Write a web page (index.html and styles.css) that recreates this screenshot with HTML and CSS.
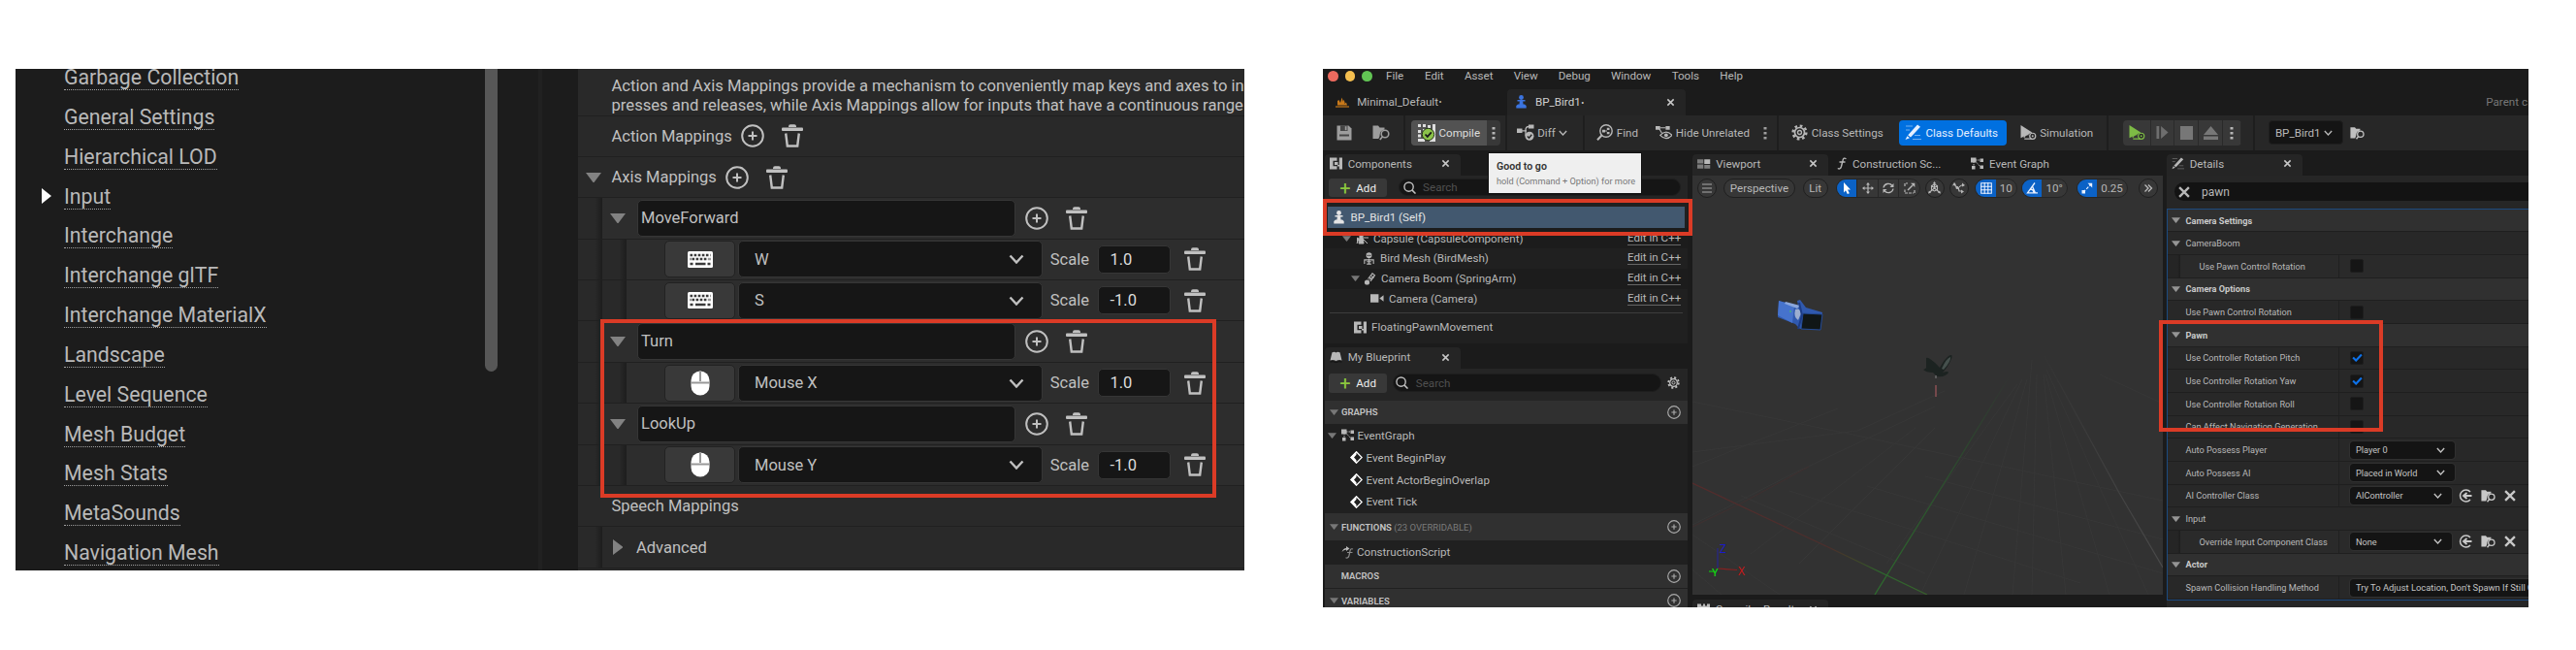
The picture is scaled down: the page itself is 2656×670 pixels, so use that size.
FILE: index.html
```html
<!DOCTYPE html>
<html lang="en">
<head>
<meta charset="utf-8">
<title>Input settings and blueprint editor</title>
<link rel="stylesheet" href="styles.css">
</head>
<body>
<svg class="defs" width="0" height="0">
  <symbol id="plus" viewBox="0 0 24 24"><circle cx="12" cy="12" r="10.8" fill="none" stroke="currentColor" stroke-width="2"/><path d="M12 7.5v9M7.500 12h9" stroke="currentColor" stroke-width="2"/></symbol>
  <symbol id="trash" viewBox="0 0 22 24"><path d="M7 3V2.500Q7 .3 9 .3h4q2 0 2 2V3z" fill="currentColor"/><rect x="0" y="3.600" width="22" height="3.400" rx="1" fill="currentColor"/><path d="M4.200 9.500l1.600 13h10.400l1.600-13" fill="none" stroke="currentColor" stroke-width="2.400"/></symbol>
  <symbol id="down" viewBox="0 0 16 10"><path d="M0 0h16L8.500 10h-1z" fill="currentColor"/></symbol>
  <symbol id="chev" viewBox="0 0 16 10"><path d="M1.500 1.500L8 8.500l6.500-7" fill="none" stroke="currentColor" stroke-width="2.400"/></symbol>
  <symbol id="kbd" viewBox="0 0 26 17"><rect width="26" height="17" rx="1.500" fill="#fff"/><path d="M2.500 4h21M4.500 8h17" stroke="#3a3a3a" stroke-width="2.600" stroke-dasharray="2.600 1.500"/><path d="M2.500 8h1M22.500 8h1M2.500 13h3M8 13h10.500M20.500 13h3" stroke="#3a3a3a" stroke-width="2.400"/></symbol>
  <symbol id="mouse" viewBox="0 0 20 26"><rect x=".5" y=".5" width="19" height="25" rx="9.500" fill="#fff"/><path d="M10 0v11M0 12.500h20" stroke="#999" stroke-width="2"/></symbol>
  <symbol id="x" viewBox="0 0 10 10"><path d="M1.500 1.500l7 7M8.500 1.500l-7 7" stroke="currentColor" stroke-width="1.700"/></symbol>
  <symbol id="dots" viewBox="0 0 4 14"><path d="M.5 1h3v2.600h-3zM.5 6h3v2.600h-3zM.5 11h3v2.600h-3z" fill="currentColor"/></symbol>
  <symbol id="search" viewBox="0 0 14 14"><circle cx="6" cy="6" r="5" fill="none" stroke="currentColor" stroke-width="1.500"/><path d="M9.500 9.500L13.500 13.500" stroke="currentColor" stroke-width="1.700"/></symbol>
  <symbol id="pawn" viewBox="0 0 11 14"><circle cx="5.500" cy="2.500" r="2.400" fill="currentColor"/><path d="M1.500 5h8v1.500h-8zM4 5h3l.6 5H3.400zM.3 11l1.700-1.500h7L10.700 11v2.600H.3z" fill="currentColor"/></symbol>
  <symbol id="save" viewBox="0 0 16 16"><path d="M.5.5h12l3 3v12H.5z" fill="currentColor"/><path d="M4 .5h7.500V6H4zM3 9.500h10v2H3z" fill="#282828" opacity=".75"/><path d="M8.800 1.200h1.700v4H8.800z" fill="currentColor"/></symbol>
  <symbol id="folder" viewBox="0 0 18 16"><path d="M.5 1h5.500l1.500 2h5v2Q8 6 7.800 9.500q0 2.500-1.500 5H.5z" fill="currentColor"/><circle cx="13" cy="9.500" r="3.800" fill="none" stroke="currentColor" stroke-width="1.600"/><path d="M10.500 12.200L7.800 15.500" stroke="currentColor" stroke-width="1.800"/></symbol>
  <symbol id="compile" viewBox="0 0 18 18"><path d="M0 0h3v3H0zM5 0h3v3H5zM10 1h3v3h-3zM0 6h3v3H0zM0 10.500h3v3H0zM0 15h3v3H0zM15 0h3v17h-3zM5 5h3v3H5zM3 15h4v3H3zM12 15h6v3h-6z" fill="#ddd"/><circle cx="10.500" cy="10.500" r="6.200" fill="#8bc24a" stroke="#26331a"/><path d="M7.500 10.500l2.300 2.400 4-4.500" fill="none" stroke="#1a1a1a" stroke-width="1.800"/></symbol>
  <symbol id="diff" viewBox="0 0 18 17"><path d="M0 4.500h5.500v4.500H0zM12 .5h5.500v4H12z" fill="currentColor"/><path d="M5 6.800h5M9 12V6q0-3.500 3-3.500" fill="none" stroke="currentColor" stroke-width="1.300"/><circle cx="13" cy="12.300" r="4.500" fill="currentColor"/><path d="M10.800 12.400l1.700 1.700 2.800-3.300" fill="none" stroke="#282828" stroke-width="1.400"/></symbol>
  <symbol id="find" viewBox="0 0 17 17"><circle cx="10" cy="7" r="6.200" fill="none" stroke="currentColor" stroke-width="1.400"/><path d="M5.500 11.500L1 16.200" stroke="currentColor" stroke-width="2"/><path d="M6 5.800h3v2.600H6zM10.800 3.800h2.700v2.200h-2.700zM10.800 8h2.700v2.200h-2.700z" fill="currentColor"/><path d="M9 7h2" stroke="currentColor"/></symbol>
  <symbol id="hide" viewBox="0 0 18 16"><path d="M0 1h5v4H0zM11 1h4.500v4H11z" fill="currentColor"/><path d="M5 3h6M4 4l3 5" fill="none" stroke="currentColor" stroke-width="1.200"/><path d="M5 11q6.500-7 13 0-6.500 7-13 0z" fill="none" stroke="currentColor" stroke-width="1.300"/><circle cx="11.500" cy="11" r="2" fill="currentColor"/></symbol>
  <symbol id="gear" viewBox="0 0 17 17"><circle cx="8.500" cy="8.500" r="6.900" fill="none" stroke="currentColor" stroke-width="2.400" stroke-dasharray="2.700 2.720"/><circle cx="8.500" cy="8.500" r="5" fill="none" stroke="currentColor" stroke-width="1.700"/><circle cx="8.500" cy="8.500" r="2" fill="none" stroke="currentColor" stroke-width="1.300"/></symbol>
  <symbol id="pencil" viewBox="0 0 17 17"><path d="M13 .5l3 2.300L6 13.500l-2.800-2.200zM2.500 12.200l2.500 2L.5 16z" fill="currentColor"/><path d="M1 2h7M1 6h4M10 11.500h6M8 15.500h9" stroke="currentColor" opacity=".5"/></symbol>
  <symbol id="sim" viewBox="0 0 18 17"><path d="M.5.5L13 8.500.5 14.500z" fill="currentColor"/><path d="M4 14q2-4 5-3M4.500 15.500h9" fill="none" stroke="currentColor" stroke-width="1.200"/><circle cx="13.500" cy="12.500" r="3.200" fill="#282828" stroke="currentColor" stroke-width="1.300"/><circle cx="13.500" cy="12.500" r="1" fill="currentColor"/></symbol>
  <symbol id="comp" viewBox="0 0 13 12"><path d="M0 0h7.500v3.200H3.500v5.600h4V12H0zM5 4.500h3.500v3H5zM9.800 0H13v12H9.800V9H8V7.500h1.800z" fill="currentColor"/></symbol>
  <symbol id="views" viewBox="0 0 14 10"><path d="M0 0h6.500v4.500H0zM0 5.500h6.500V10H0zM7.500 6H14v4H7.500z" fill="currentColor" opacity=".6"/><path d="M7.500 0H14v5H7.500z" fill="currentColor"/></symbol>
  <symbol id="graph" viewBox="0 0 13 12"><path d="M0 0h5.500v5H0zM9.500 1H13v3.500H9.500zM1 8.500h3.500V12H1zM9.500 8H13v3.500H9.500z" fill="currentColor"/><path d="M5 2.500h5M3 4v5M5 4l5 5.500" stroke="currentColor" stroke-dasharray="1.500 1"/></symbol>
  <symbol id="func" viewBox="0 0 10 13"><path d="M9.500 1.800Q6.800-.2 6 3.500L4.500 9.500Q3.500 13 .8 11.500M2.500 5h6" fill="none" stroke="currentColor" stroke-width="1.400"/></symbol>
  <symbol id="cfunc" viewBox="0 0 13 13"><path d="M12 3Q9.500 2 9 5L8 9.500Q7 13 4.500 11.800M6 6.500h5.500" fill="none" stroke="currentColor" stroke-width="1.200" opacity=".7"/><path d="M.5 6Q2 2 5 2V0l3.500 2.500L5 5V3.500Q2.500 3.500.5 6z" fill="currentColor"/></symbol>
  <symbol id="event" viewBox="0 0 13 13"><path d="M6.500.8l5.700 5.700-5.700 5.700L.8 6.500z" fill="none" stroke="#fff" stroke-width="1.300"/><path d="M6.500.3v3.500L4 6.500l2.500 2.700v3.500L.3 6.500z" fill="#fff"/></symbol>
  <symbol id="capsule" viewBox="0 0 13 13"><circle cx="5.500" cy="3" r="2.500" fill="currentColor"/><path d="M4 5h3l1 7H3zM1 6l2 1-2 5M8 3l4-2M8 6h5M8 8l4 4" fill="currentColor" stroke="currentColor"/></symbol>
  <symbol id="skel" viewBox="0 0 12 14"><path d="M3 1.500Q6-1 9 1.500V5L7.500 6.500h-3L3 5z" fill="currentColor"/><path d="M4.300 3h1.200v1.200H4.300zM6.500 3h1.200v1.200H6.500z" fill="#222"/><path d="M1 13V8.500h10V13M6 7v6M3.500 10.500h5M3.500 13h5" fill="none" stroke="currentColor" stroke-width="1.200"/></symbol>
  <symbol id="arm" viewBox="0 0 12 13"><circle cx="3" cy="10" r="2.600" fill="currentColor"/><path d="M4 6.500L8.500.8l2.500 2-4.500 6" fill="none" stroke="currentColor" stroke-width="1.100"/><path d="M5.500 5l3 2M7 3.200l3 2M5 7.500l5-4" stroke="currentColor"/></symbol>
  <symbol id="cam" viewBox="0 0 15 9"><path d="M0 0h9v9H0zM14.500 1v7L10 4.500z" fill="currentColor"/></symbol>
  <symbol id="book" viewBox="0 0 13 12"><path d="M2.500.8Q5-.3 6.500 1 8-.3 10.500.8L12.500 9q-3-1-6 .6Q3.500 8 .5 9z" fill="currentColor"/><path d="M.5 10.500q3-1 6 .6 3-1.600 6-.6" fill="none" stroke="#111"/></symbol>
  <symbol id="level" viewBox="0 0 14 11"><path d="M2 8.500V4l1.500-1L5 6 6.500.5 8 5V2.500L9.500 5v2l1.500-1.500 1 3z" fill="#c8791a"/><path d="M0 10h14" stroke="#c8791a" stroke-width="1.200"/></symbol>
  <symbol id="move" viewBox="0 0 12 12"><path d="M6 1v10M1 6h10" stroke="currentColor" stroke-width="1.200"/><path d="M6 0l2 2.500H4zM6 12l2-2.500H4zM0 6l2.500-2v4zM12 6L9.500 4v4z" fill="currentColor"/></symbol>
  <symbol id="rot" viewBox="0 0 12 12"><path d="M1 5.500A5 5 0 0 1 10 3.500M11 6.500A5 5 0 0 1 2 8.500" fill="none" stroke="currentColor" stroke-width="1.300"/><path d="M11.500 1v4h-4zM.5 11V7h4z" fill="currentColor"/></symbol>
  <symbol id="scale" viewBox="0 0 12 12"><path d="M1 4V1h3M8 11H1V7.500M11 8v3H9" fill="none" stroke="currentColor" stroke-width="1.200" stroke-dasharray="3 1"/><path d="M4 8l5-5" stroke="currentColor" stroke-width="1.400"/><path d="M7 .8h4.300V5z" fill="currentColor"/></symbol>
  <symbol id="gizmo" viewBox="0 0 13 13"><path d="M6.500 1v6M6.500 7L1 11.500M6.500 7l5.500 4.500M3.500 4.500l3-1.500 3 1.500v4l-3 1.500-3-1.500zM3.500 4.500l3 2 3-2" fill="none" stroke="currentColor" stroke-width="1.100"/><path d="M6.500 0l1.800 2.500H4.700zM0 12.500l1-3 2 2.200zM13 12.500l-1-3-2 2.200z" fill="currentColor"/></symbol>
  <symbol id="snap" viewBox="0 0 13 13"><path d="M2 2q1 4 4 4M6 6l1 4h3M7 6q2-3 5-2" fill="none" stroke="currentColor" stroke-width="1.200"/><path d="M0 4.500l4-1L2 1zM10 1.500l3 2.500-3 1.500zM9 8.500l3 2-3 2z" fill="currentColor"/><circle cx="5" cy="6.500" r="1.500" fill="currentColor"/></symbol>
  <symbol id="grid" viewBox="0 0 12 12"><path d="M.7.7h10.600v10.600H.7zM4.200 0v12M7.800 0v12M0 4.200h12M0 7.800h12" fill="none" stroke="currentColor" stroke-width="1.100"/></symbol>
  <symbol id="angle" viewBox="0 0 12 12"><path d="M9 .5L1.500 10.800H12M4 7q4 0 4 4M6.500 4l3 7" fill="none" stroke="currentColor" stroke-width="1.300"/></symbol>
  <symbol id="resize" viewBox="0 0 12 12"><path d="M2 10l8-8" stroke="currentColor" stroke-width="1.200" stroke-dasharray="3 1.500"/><path d="M6.500.8h4.700v4.700zM.5 8h3.500v3.500H.5z" fill="currentColor"/></symbol>
  <symbol id="use" viewBox="0 0 13 14"><path d="M11.500 3A6 6 0 1 0 11.500 11" fill="none" stroke="currentColor" stroke-width="1.500"/><path d="M5 7h8M8 4L4.500 7 8 10" fill="none" stroke="currentColor" stroke-width="1.800"/></symbol>
</svg>

<main class="shots">
  <section class="settings">
    <nav class="cats">
      <a>Garbage Collection</a><a>General Settings</a><a>Hierarchical LOD</a><a class="cur">Input</a><a>Interchange</a><a>Interchange glTF</a><a>Interchange MaterialX</a><a>Landscape</a><a>Level Sequence</a><a>Mesh Budget</a><a>Mesh Stats</a><a>MetaSounds</a><a>Navigation Mesh</a>
    </nav>
    <div class="scroll"><div class="thumb"></div></div>
    <div class="split"></div>
    <div class="table">
      <p class="desc">Action and Axis Mappings provide a mechanism to conveniently map keys and axes to in<br>presses and releases, while Axis Mappings allow for inputs that have a continuous range</p>
      <div class="row top">Action Mappings<svg class="plus"><use href="#plus"/></svg><svg class="trash"><use href="#trash"/></svg></div>
      <div class="row top"><svg class="tri"><use href="#down"/></svg>Axis Mappings<svg class="plus"><use href="#plus"/></svg><svg class="trash"><use href="#trash"/></svg></div>
      <div class="row"><i class="ind"></i><svg class="tri"><use href="#down"/></svg><div class="name">MoveForward</div><svg class="plus"><use href="#plus"/></svg><svg class="trash"><use href="#trash"/></svg></div>
      <div class="row key"><i class="ind"></i><i class="ind"></i><div class="dev"><svg class="kbd"><use href="#kbd"/></svg></div><div class="pick">W<svg class="chev"><use href="#chev"/></svg></div><span class="lab">Scale</span><div class="num">1.0</div><svg class="trash"><use href="#trash"/></svg></div>
      <div class="row key"><i class="ind"></i><i class="ind"></i><div class="dev"><svg class="kbd"><use href="#kbd"/></svg></div><div class="pick">S<svg class="chev"><use href="#chev"/></svg></div><span class="lab">Scale</span><div class="num">-1.0</div><svg class="trash"><use href="#trash"/></svg></div>
      <div class="row"><i class="ind"></i><svg class="tri"><use href="#down"/></svg><div class="name">Turn</div><svg class="plus"><use href="#plus"/></svg><svg class="trash"><use href="#trash"/></svg></div>
      <div class="row key"><i class="ind"></i><i class="ind"></i><div class="dev"><svg class="mouse"><use href="#mouse"/></svg></div><div class="pick">Mouse X<svg class="chev"><use href="#chev"/></svg></div><span class="lab">Scale</span><div class="num">1.0</div><svg class="trash"><use href="#trash"/></svg></div>
      <div class="row"><i class="ind"></i><svg class="tri"><use href="#down"/></svg><div class="name">LookUp</div><svg class="plus"><use href="#plus"/></svg><svg class="trash"><use href="#trash"/></svg></div>
      <div class="row key"><i class="ind"></i><i class="ind"></i><div class="dev"><svg class="mouse"><use href="#mouse"/></svg></div><div class="pick">Mouse Y<svg class="chev"><use href="#chev"/></svg></div><span class="lab">Scale</span><div class="num">-1.0</div><svg class="trash"><use href="#trash"/></svg></div>
      <div class="row top">Speech Mappings</div>
      <div class="row adv"><i class="ind"></i><svg class="tri shut"><use href="#down"/></svg>Advanced</div>
    </div>
    <div class="mark mark-axis"></div>
  </section>

  <section class="editor">
    <div class="menu"><b class="dot red"></b><b class="dot yel"></b><b class="dot grn"></b><span>File</span><span>Edit</span><span>Asset</span><span>View</span><span>Debug</span><span>Window</span><span>Tools</span><span>Help</span></div>
    <div class="tabs">
      <div class="tab1"><svg class="i-level"><use href="#level"/></svg>Minimal_Default<small>•</small></div>
      <div class="tab2"><svg class="i-pawn blue"><use href="#pawn"/></svg><span>BP_Bird1<small>•</small></span><svg class="close"><use href="#x"/></svg></div>
      <div class="parent">Parent c</div>
    </div>
    <div class="bar">
      <svg class="i16"><use href="#save"/></svg>
      <svg class="i18"><use href="#folder"/></svg>
      <i class="sep"></i>
      <div class="compile"><div class="lit"><svg class="i18t"><use href="#compile"/></svg>Compile</div><svg class="dots"><use href="#dots"/></svg></div>
      <i class="sep"></i>
      <div class="act"><svg class="i18"><use href="#diff"/></svg>Diff<svg class="chs"><use href="#chev"/></svg></div>
      <i class="sep"></i>
      <div class="act"><svg class="i17"><use href="#find"/></svg>Find</div>
      <div class="act"><svg class="i17"><use href="#hide"/></svg>Hide Unrelated</div>
      <svg class="dots"><use href="#dots"/></svg>
      <i class="sep"></i>
      <div class="act"><svg class="i17"><use href="#gear"/></svg>Class Settings</div>
      <div class="defaults"><svg class="i17"><use href="#pencil"/></svg>Class Defaults</div>
      <div class="act"><svg class="i17"><use href="#sim"/></svg>Simulation</div>
      <i class="sep"></i>
      <div class="play"><span><svg class="i17 green"><use href="#sim"/></svg></span><span><svg class="i13" viewBox="0 0 13 14"><path d="M0 0h3v14H0zM5 0l8 7-8 7z" fill="#6e6e6e"/></svg></span><span><b class="stop"></b></span><span><svg class="i15" viewBox="0 0 15 14"><path d="M7.500 0L15 9H0zM0 10.500h15V14H0z" fill="#777"/></svg></span><span><svg class="dots"><use href="#dots"/></svg></span></div>
      <i class="sep"></i>
      <div class="bp">BP_Bird1<svg class="chs"><use href="#chev"/></svg></div>
      <svg class="i15"><use href="#folder"/></svg>
    </div>
    <div class="cols">
      <div class="left">
        <div class="ptab"><svg class="i13"><use href="#comp"/></svg><span>Components</span><svg class="close"><use href="#x"/></svg></div>
        <div class="comps">
          <div class="tools"><div class="add"><b>+</b>Add</div><div class="find"><svg class="i13"><use href="#search"/></svg>Search</div></div>
          <div class="self"><svg class="i-pawn"><use href="#pawn"/></svg>BP_Bird1 (Self)</div>
          <div class="c c1"><svg class="tr"><use href="#down"/></svg><svg class="i13"><use href="#capsule"/></svg>Capsule (CapsuleComponent)<u>Edit in C++</u></div>
          <div class="c c2"><svg class="i13"><use href="#skel"/></svg>Bird Mesh (BirdMesh)<u>Edit in C++</u></div>
          <div class="c c3"><svg class="tr"><use href="#down"/></svg><svg class="i13"><use href="#arm"/></svg>Camera Boom (SpringArm)<u>Edit in C++</u></div>
          <div class="c c4"><svg class="i-cam"><use href="#cam"/></svg>Camera (Camera)<u>Edit in C++</u></div>
          <div class="c c5"><svg class="i13"><use href="#comp"/></svg>FloatingPawnMovement</div>
        </div>
        <div class="ptab"><svg class="i13"><use href="#book"/></svg><span>My Blueprint</span><svg class="close"><use href="#x"/></svg></div>
        <div class="bpp">
          <div class="tools t2"><div class="add"><b>+</b>Add</div><div class="find"><svg class="i13"><use href="#search"/></svg>Search</div><svg class="i13"><use href="#gear"/></svg></div>
          <div class="hd"><svg class="tr"><use href="#down"/></svg>GRAPHS<svg class="pl"><use href="#plus"/></svg></div>
          <div class="g g1"><svg class="tr"><use href="#down"/></svg><svg class="i13"><use href="#graph"/></svg>EventGraph</div>
          <div class="g"><svg class="i13"><use href="#event"/></svg>Event BeginPlay</div>
          <div class="g"><svg class="i13"><use href="#event"/></svg>Event ActorBeginOverlap</div>
          <div class="g"><svg class="i13"><use href="#event"/></svg>Event Tick</div>
          <div class="hd fn"><svg class="tr"><use href="#down"/></svg>FUNCTIONS&nbsp;<em>(23 OVERRIDABLE)</em><svg class="pl"><use href="#plus"/></svg></div>
          <div class="g cs"><svg class="i13"><use href="#cfunc"/></svg>ConstructionScript</div>
          <div class="hd mac">MACROS<svg class="pl"><use href="#plus"/></svg></div>
          <div class="hd var"><svg class="tr"><use href="#down"/></svg>VARIABLES<svg class="pl"><use href="#plus"/></svg></div>
        </div>
      </div>
      <div class="mid">
        <div class="vtabs"><div class="ptab"><svg class="i-view"><use href="#views"/></svg><span>Viewport</span><svg class="close"><use href="#x"/></svg></div><div class="vt"><svg class="i-f"><use href="#func"/></svg>Construction Sc...</div><div class="vt"><svg class="i13"><use href="#graph"/></svg>Event Graph</div></div>
        <div class="view">
          <div class="vbar">
            <div class="rnd"><svg class="i10" viewBox="0 0 10 10"><path d="M0 1h10M0 5h10M0 9h10" stroke="#aaa" stroke-width="1.200"/></svg></div>
            <div class="rnd">Perspective</div><div class="rnd">Lit</div>
            <div class="seg four"><span class="on"><svg class="i12" viewBox="0 0 12 12"><path d="M3 0l7 7.500H7l1.800 3.700-2 .8L5 8.200 3 10.500z" fill="#fff"/></svg></span><span><svg class="i12"><use href="#move"/></svg></span><span><svg class="i12"><use href="#rot"/></svg></span><span><svg class="i12"><use href="#scale"/></svg></span></div>
            <div class="rnd"><svg class="i13"><use href="#gizmo"/></svg></div>
            <div class="rnd"><svg class="i13"><use href="#snap"/></svg></div>
            <div class="seg"><span class="on"><svg class="i12"><use href="#grid"/></svg></span><span>10</span></div>
            <div class="seg"><span class="on"><svg class="i12"><use href="#angle"/></svg></span><span>10°</span></div>
            <div class="seg"><span class="on"><svg class="i12"><use href="#resize"/></svg></span><span>0.25</span></div>
            <div class="rnd"><svg class="i10" viewBox="0 0 10 10"><path d="M1.500 1.500L5 5 1.500 8.500M5 1.500L8.500 5 5 8.500" fill="none" stroke="#bbb" stroke-width="1.300"/></svg></div>
          </div>
          <svg class="scene" viewBox="0 28 485 404">
            <defs>
              <linearGradient id="gl" x1="0" y1="1" x2="0" y2="0"><stop offset="0" stop-color="#2d6b2d"/><stop offset=".6" stop-color="#2c4a2e"/><stop offset="1" stop-color="#323232"/></linearGradient>
              <linearGradient id="rl" x1="0" y1="0" x2="1" y2="0"><stop offset="0" stop-color="#562b2b"/><stop offset=".58" stop-color="#4c2e2c"/><stop offset=".72" stop-color="#3c4a28"/><stop offset=".8" stop-color="#2d6b2d"/><stop offset="1" stop-color="#37612b"/></linearGradient>
              <linearGradient id="wl" x1="0" y1="0" x2="0" y2="1"><stop offset="0" stop-color="#333"/><stop offset="1" stop-color="#4a4a4a"/></linearGradient>
            </defs>
            <g fill="none" stroke="#373737" stroke-width="1">
              <path d="M0 233L170 268 283 292 485 335M0 285L170 263 260 222M0 360L100 309 250 238M0 406L30 432M0 370L90 432M50 330L240 410M100 325L400 420M180 320L485 410M240 310L485 375M350 190L330 432M345 210L280 432M355 205L350 432M362 205L385 432M364 205L430 432M340 210L235 432M335 215L200 400M365 200L470 432M420 205L485 235M0 300L150 240M60 390L230 260M110 400L250 260"/>
            </g>
            <path d="M363 186L440 327 485 404" stroke="url(#wl)" fill="none" stroke-width="1.200"/>
            <path d="M0 362L50 338 120 300" stroke="#3f3030" fill="none"/>
            <path d="M0 317L140 383 242 432" stroke="url(#rl)" fill="none" stroke-width="1.200"/>
            <path d="M328 205L275 292 188 432" stroke="url(#gl)" fill="none" stroke-width="1.300"/>
            <g>
              <path d="M89 129l16 4 4 1-1-5 3-1 6 8 17 5-2 18-21-1-5-5-18-7z" fill="#3059ae"/>
              <path d="M89 129l16 5-2 18-15-8z" fill="#4673cd"/><path d="M96 130l15 4-3 3-13-5z" fill="#8aa6dc"/>
              <path d="M114 142l20 1-2 16-20-1z" fill="#101617" stroke="#244b96"/><path d="M106 138q5-2 6 4l-3 7q-5-3-3-11z" fill="#9caed0"/><path d="M110 131l3 13-4 14" stroke="#1d3c86" stroke-width="2" fill="none"/><circle cx="101" cy="140" r="1" fill="#43b37a"/>
            </g>
            <g>
              <path d="M241 188q1-1 4 1 6 4 10 9 5-9 9-12 5-3 3 3-4 9-9 14 6-2 6 0-3 5-12 4l-4-4q-7 0-10-3 3-1 3-2z" fill="#1c2321"/>
              <path d="M257 199q5-11 9-12 1 4-7 13z" fill="#45504d"/><path d="M251 216v12" stroke="#8c5055" stroke-width="1.500"/><path d="M251 206v3" stroke="#5a5a5a" stroke-width="2"/>
            </g>
            <path d="M26 384v21" stroke="#25258a" stroke-width="1.200"/><path d="M26 405l20 1.500" stroke="#8a2020" stroke-width="1.200"/><path d="M17 408h5" stroke="#14b814" stroke-width="1.300"/>
            <text x="28" y="389" fill="#1a1acb" class="ax">Z</text><text x="20" y="412.500" fill="#12cf12" class="ax sm">Y</text><text x="47" y="411.500" fill="#cf1515" class="ax">X</text>
          </svg>
        </div>
        <div class="ptab results"><svg class="i13" viewBox="0 0 13 12"><path d="M1 0h3v2h2V0h2v2h2V0h3v12H0V0z" fill="#bbb"/></svg><span>Compiler Results</span><svg class="close"><use href="#x"/></svg></div>
      </div>
      <div class="right">
        <div class="ptab"><svg class="i13"><use href="#pencil"/></svg><span>Details</span><svg class="close"><use href="#x"/></svg></div>
        <div class="dbody">
          <div class="dsearch"><svg class="i14"><use href="#x"/></svg>pawn</div>
          <div class="props">
            <div class="p cat"><svg class="tr"><use href="#down"/></svg>Camera Settings</div>
            <div class="p grp"><svg class="tr"><use href="#down"/></svg>CameraBoom</div>
            <div class="p sub"><span>Use Pawn Control Rotation</span><b class="chk"></b></div>
            <div class="p cat"><svg class="tr"><use href="#down"/></svg>Camera Options</div>
            <div class="p"><span>Use Pawn Control Rotation</span><b class="chk"></b></div>
            <div class="p cat"><svg class="tr"><use href="#down"/></svg>Pawn</div>
            <div class="p"><span>Use Controller Rotation Pitch</span><b class="chk"><svg viewBox="0 0 10 8"><path d="M1 4l2.800 2.800L9 1.200" fill="none" stroke="#0d72ea" stroke-width="1.900"/></svg></b></div>
            <div class="p"><span>Use Controller Rotation Yaw</span><b class="chk"><svg viewBox="0 0 10 8"><path d="M1 4l2.800 2.800L9 1.200" fill="none" stroke="#0d72ea" stroke-width="1.900"/></svg></b></div>
            <div class="p"><span>Use Controller Rotation Roll</span><b class="chk"></b></div>
            <div class="p"><span>Can Affect Navigation Generation</span><b class="chk"></b></div>
            <div class="p"><span>Auto Possess Player</span><div class="sel wide">Player 0<svg class="chs"><use href="#chev"/></svg></div></div>
            <div class="p"><span>Auto Possess AI</span><div class="sel wide">Placed in World<svg class="chs"><use href="#chev"/></svg></div></div>
            <div class="p"><span>AI Controller Class</span><div class="sel">AIController<svg class="chs"><use href="#chev"/></svg></div><svg class="i14 a"><use href="#use"/></svg><svg class="i15 a"><use href="#folder"/></svg><svg class="i14 a"><use href="#x"/></svg></div>
            <div class="p grp"><svg class="tr"><use href="#down"/></svg>Input</div>
            <div class="p sub"><span>Override Input Component Class</span><div class="sel">None<svg class="chs"><use href="#chev"/></svg></div><svg class="i14 a"><use href="#use"/></svg><svg class="i15 a"><use href="#folder"/></svg><svg class="i14 a"><use href="#x"/></svg></div>
            <div class="p cat"><svg class="tr"><use href="#down"/></svg>Actor</div>
            <div class="p"><span>Spawn Collision Handling Method</span><div class="sel full">Try To Adjust Location, Don't Spawn If Still Colliding</div></div>
          </div>
        </div>
      </div>
    </div>
    <div class="tip"><strong>Good to go</strong><small>hold (Command + Option) for more</small></div>
    <div class="mark mark-self"></div>
    <div class="mark mark-pawn"></div>
  </section>
</main>
</body>
</html>
```
FILE: styles.css
```css
* { box-sizing: border-box; }
body { margin: 0; background: #fff; font-family: Roboto, "Liberation Sans", sans-serif; }
svg { display: block; flex: none; }
.defs { position: absolute; }
.shots { display: flex; gap: 81px; align-items: flex-start; padding: 71px 0 0 16px; width: 2656px; height: 670px; overflow: hidden; }
.mark { position: absolute; border: 4px solid #db3b26; }

/* project settings */
.settings { position: relative; display: flex; width: 1267px; height: 517px; overflow: hidden; background: #1c1c1c; color: #c0c0c0; font-size: 16.5px; }
.cats { width: 484px; padding-left: 50px; margin-top: -4px; display: flex; flex-direction: column; align-items: flex-start; }
.cats a { position: relative; flex: none; height: 26px; margin-bottom: 14.85px; line-height: 25px; font-size: 21.3px; color: #b9b9b9; border-bottom: 1px dotted #a0a0a0; white-space: nowrap; }
.cats .cur::before { content: ""; position: absolute; left: -23.500px; top: 4px; border: solid transparent; border-width: 8px 0 8px 10px; border-left-color: #fff; }
.scroll { width: 13px; }
.thumb { height: 312px; background: #575757; border-radius: 0 0 7px 7px; }
.split { width: 4px; margin: 0 37px 0 42px; background: #212121; }
.table { flex: 1; width: 687px; overflow: hidden; background: #292929; }
.desc { margin: 0; height: 48.500px; padding: 8px 0 0 34.500px; line-height: 19.700px; font-size: 16.640px; white-space: nowrap; border-bottom: 1.500px solid #202020; }
.row { display: flex; align-items: center; height: 42.400px; background: #2d2d2d; border-bottom: 1.500px solid #202020; }
.top, .adv { background: #292929; }
.top { padding-left: 34.500px; }
.row .tri { width: 16px; height: 10px; color: #828282; margin-left: 8px; margin-right: 12px; }
.top .tri { margin-left: -27px; margin-right: 11px; }
.row .shut { transform: rotate(-90deg); margin-right: 11px; }
.ind { width: 25px; align-self: stretch; background: linear-gradient(90deg, #292929 70%, #1d1d1d); }
.plus { width: 24px; height: 24px; margin-left: 9px; }
.trash { width: 22px; height: 24px; margin-left: 18px; }
.name { width: 389.500px; height: 38px; line-height: 36px; padding-left: 3px; background: #161616; border: 1px solid #363636; border-radius: 5px; }
.name + .plus { margin-left: 10px; }
.dev { width: 73px; height: 38px; margin-left: 39px; display: grid; place-items: center; background: #393939; border: 1px solid #222; border-radius: 5px; }
.kbd { width: 26px; height: 17px; }
.mouse { width: 20px; height: 26px; }
.pick { width: 314px; height: 38px; margin-left: 3px; padding: 0 18px 0 16px; display: flex; align-items: center; justify-content: space-between; background: #161616; border: 1px solid #363636; border-radius: 5px; }
.chev { width: 16px; height: 10px; }
.lab { width: 56.500px; padding-left: 7.800px; }
.num { width: 75px; height: 29px; line-height: 27px; padding-left: 12px; background: #161616; border: 1px solid #363636; border-radius: 5px; color: #ddd; }
.num + .trash { margin-left: 14.500px; }
.mark-axis { left: 603px; top: 258px; width: 635px; height: 184px; }

/* blueprint editor */
.editor { position: relative; width: 1243px; height: 555px; overflow: hidden; background: #1b1b1b; color: #b8b8b8; font-size: 11.600px; white-space: nowrap; }
.menu { display: grid; grid-template-columns: 17.300px 17.700px 24.700px 40px 41px 50.700px 46px 54.300px 62.700px 49.600px 1fr; padding-left: 5.300px; height: 20.500px; align-items: center; padding-bottom: 6px; }
.dot { width: 10.700px; height: 10.700px; border-radius: 50%; }
.red { background: #ed6a5e; } .yel { background: #f5bf4f; } .grn { background: #62c554; }
.tabs { display: grid; grid-template-columns: 190px 184px 825.300px 1fr; height: 27px; align-items: stretch; }
.tabs > div { display: flex; align-items: center; }
.tabs small { font-size: 9px; margin-left: .5px; }
.tab1 { padding-left: 12.700px; }
.i-level { width: 14px; height: 11px; margin-right: 8.500px; }
.tab2 { background: #242424; border-radius: 4px 4px 0 0; padding: 0 11px 0 9px; color: #d0d0d0; }
.tab2 span { flex: 1; padding-left: 9px; }
.i-pawn { width: 11px; height: 14px; color: #e4e4e4; }
.blue { color: #3b74e0; }
.close { width: 9px; height: 9px; color: #c8c8c8; }
.parent { grid-column: 4; color: #777; }
.bar { height: 36.500px; background: #272727; display: grid; align-items: center; padding-left: 13.700px; grid-template-columns: 37px 32.600px 7.700px 97px 11.700px 68px 14.600px 61px 110.700px 14px 15.300px 110.700px 124.700px 89.600px 16.700px 134px 16px 84px 1fr; }
.bar > svg { color: #9d9d9d; }
.sep { width: 2px; height: 36px; background: #1e1e1e; }
.i10 { width: 10px; height: 10px; } .i12 { width: 12px; height: 12px; } .i13 { width: 13px; height: 13px; } .i14 { width: 14px; height: 14px; } .i15 { width: 15px; height: 14px; }
.i16 { width: 16px; height: 16px; } .i17 { width: 17px; height: 17px; } .i18 { width: 18px; height: 17px; } .i18t { width: 18px; height: 18px; }
.dots { width: 4px; height: 14px; color: #b5b5b5; }
.act { display: flex; align-items: center; gap: 3.600px; }
.chs { width: 9px; height: 6px; }
.compile { display: flex; align-items: center; width: 92.300px; height: 26px; background: #383838; border-radius: 4px; overflow: hidden; color: #dedede; }
.lit { display: flex; align-items: center; gap: 3.500px; width: 78px; height: 100%; padding-left: 7px; background: #525252; }
.compile .dots { margin-left: 5px; }
.defaults { display: flex; align-items: center; gap: 4px; width: 110.700px; height: 26px; padding-left: 6.500px; background: #0070e0; border-radius: 4px; color: #e6efff; }
.play { display: grid; grid-template-columns: 29.500px 24px 24.600px 25.400px 19px; width: 122.500px; height: 26px; background: #383838; border-radius: 4px; overflow: hidden; }
.play span { display: grid; place-items: center; border-right: 1px solid #2a2a2a; }
.green { color: #7dbb45; }
.stop { width: 13px; height: 14px; background: #777; }
.bp { display: flex; align-items: center; justify-content: space-between; width: 77px; height: 25px; padding: 0 10px 0 6px; background: #141414; border-radius: 4px; border: 1px solid #1f1f1f; }
.bar > .i15 { color: #c0c0c0; }

.cols { display: grid; grid-template-columns: 379px 489px 1fr; height: 471px; padding: 3.700px 0 0 2px; }
.ptab { display: flex; align-items: center; width: 139.700px; height: 22px; flex: none; background: #252525; border-radius: 4px 4px 0 0; padding: 0 11px 2px 5px; }
.ptab span { flex: 1; padding-left: 5.700px; }
.left { width: 374.300px; }
.comps { height: 173px; margin-bottom: 4.700px; background: #202020; }
.tools { display: grid; grid-template-columns: 60px 1fr; gap: 11.300px; height: 27px; padding: 3.300px 7px 0 4.300px; background: #252525; }
.add { display: flex; align-items: center; height: 19.500px; background: #383838; border-radius: 3px; padding-left: 11px; color: #eee; }
.add b { width: 17px; font-size: 20px; font-weight: 400; line-height: 12px; color: #8cc63e; }
.tools .find { display: flex; align-items: center; gap: 7.500px; height: 18.500px; border-radius: 10px; background: #151515; color: #505050; padding-left: 4px; border: 1px solid #1e1e1e; }
.find svg { color: #c0c0c0; }
.self { display: flex; align-items: center; gap: 6.500px; height: 22px; margin: 5px 3.300px .5px 3px; padding-left: 6px; background: #42586f; color: #e4e4e4; }
.c { display: flex; align-items: center; height: 20.800px; padding-right: 7px; gap: 5px; }
.tr { width: 9px; height: 6px; color: #777; }
.c u { margin-left: auto; text-decoration: none; border-bottom: 1px solid #666; line-height: 13px; }
.c1 { padding-left: 18px; background: #1c1c1c; }
.c2 { padding-left: 39px; }
.c3 { padding-left: 27px; background: #1c1c1c; }
.c3 .tr { margin-right: -1px; }
.c4 { padding-left: 47px; }
.i-cam { width: 14px; height: 9px; }
.c5 { margin: 4px 5px 0; padding-left: 25px; height: 29px; border-top: 1.500px solid #3c3c3c; }
.t2 { height: 32.300px; padding-top: 5px; grid-template-columns: 60px 277px 13px; gap: 6px; }
.t2 .find { gap: 7.500px; padding-left: 2px; }
.t2 > svg { margin-top: 3px; color: #c0c0c0; }
.bpp { background: #202020; }
.hd { display: flex; align-items: center; height: 24.300px; padding: 0 7px 0 5px; background: #303030; color: #c4c4c4; font-size: 9.500px; font-weight: 600; }
.hd .tr { margin-right: 3px; }
.hd em { font-style: normal; font-weight: 400; color: #7a7a7a; }
.pl { width: 14px; height: 14px; margin-left: auto; color: #aaa; }
.g { display: flex; align-items: center; gap: 3.500px; height: 22.700px; padding-left: 26px; }
.g1 { padding-left: 2.500px; height: 23.500px; }
.g1 .tr { margin-right: 2px; }
.fn { height: 28px; margin-top: .7px; }
.cs { padding-left: 16.500px; height: 24.300px; }
.mac { padding-left: 16.700px; margin-bottom: 1.500px; }

.mid { width: 485px; display: flex; flex-direction: column; }
.vtabs { display: grid; grid-template-columns: 149px 138px 1fr; }
.vt { display: flex; align-items: center; gap: 6px; padding-bottom: 2px; }
.i-view { width: 13.500px; height: 10px; } .i-f { width: 10px; height: 13px; }
.view { height: 432px; background: #323232; }
.vbar { display: grid; grid-template-columns: 27.300px 81.400px 34.300px 91.700px 25.300px 26.300px 47.700px 56.700px 64.300px 20px; height: 28px; padding: 3.300px 0 0 5px; font-size: 11.600px; }
.rnd { display: grid; place-items: center; justify-self: start; height: 20px; min-width: 20px; border: 1px solid #1f1f1f; border-radius: 10px; background: #373737; padding: 0 5.500px; }
.vbar .rnd:has(svg) { width: 20px; padding: 0; }
.seg { display: flex; justify-self: start; height: 20px; border-radius: 10px; overflow: hidden; background: #373737; border: 1px solid #252525; }
.seg span { display: grid; place-items: center; width: 21px; }
.seg .on { width: 20.500px; background: #0b62c6; color: #e8f0ff; }
.four span + span { border-left: 1px solid #272727; width: 21.500px; }
.seg:not(.four) span + span { width: auto; padding: 0 4px; }
.scene { width: 485px; height: 404px; }
.ax { font: 12px "Open Sans", sans-serif; } .sm { font-size: 11px; font-weight: 600; }
.results { margin-top: 5.600px; }

.dbody { height: 446px; background: #262626; }
.dsearch { display: flex; align-items: center; gap: 11.500px; height: 19px; margin: 0 0 7.300px 7.500px; padding-left: 3px; background: #131313; border-radius: 10px 0 0 10px; font-size: 12px; }
.right .ptab { margin-bottom: 7.700px; }
.right { background: linear-gradient(#1b1b1b 22px, #262626 22px); }
.props { width: 376px; height: 404px; border: 1px solid #1c4a80; font-size: 9.200px; background: #282828; }
.p { display: flex; align-items: center; height: 23.660px; padding-left: 18.500px; border-bottom: 1px solid #1f1f1f; }
.p > span { flex: none; width: 158.500px; align-self: stretch; display: flex; align-items: center; border-right: 1px solid #202020; margin-right: 11px; }
.cat { background: #303030; font-weight: 700; color: #cacaca; }
.cat, .grp { padding-left: 4px; }
.p .tr { margin-right: 5.500px; color: #959595; }
.sub { padding-left: 32.500px; background: linear-gradient(90deg, #252525 10px, #1d1d1d 13px, #2a2a2a 13px); }
.sub > span { width: 144.500px; }
.chk { width: 14px; height: 14px; background: #151515; border: 1px solid #1d1d1d; border-radius: 2px; display: grid; place-items: center; }
.chk svg { width: 11px; height: 9px; }
.sel { flex: none; display: flex; align-items: center; justify-content: space-between; width: 105px; height: 18px; padding: 0 10px 0 6px; background: #141414; border-radius: 3px; outline: 1px solid #303030; color: #c4c4c4; }
.wide { width: 107.500px; }
.full { width: 300px; font-size: 9.400px; }
.a { margin-left: 7px; color: #c8c8c8; }
.a + .a { margin-left: 8.500px; }

.tip { position: absolute; left: 170px; top: 85.500px; width: 158.500px; height: 43.500px; padding: 7.500px 0 0 8px; background: #efefef; border: 1px solid #111; color: #333; display: flex; flex-direction: column; gap: 3px; }
.tip strong { font-size: 10.600px; font-weight: 600; line-height: 13px; }
.tip small { font-size: 9.200px; line-height: 11px; color: #777; }
.mark-self { left: 0; top: 134px; width: 381px; height: 38px; }
.mark-pawn { left: 862px; top: 259px; width: 231px; height: 115px; }
```
